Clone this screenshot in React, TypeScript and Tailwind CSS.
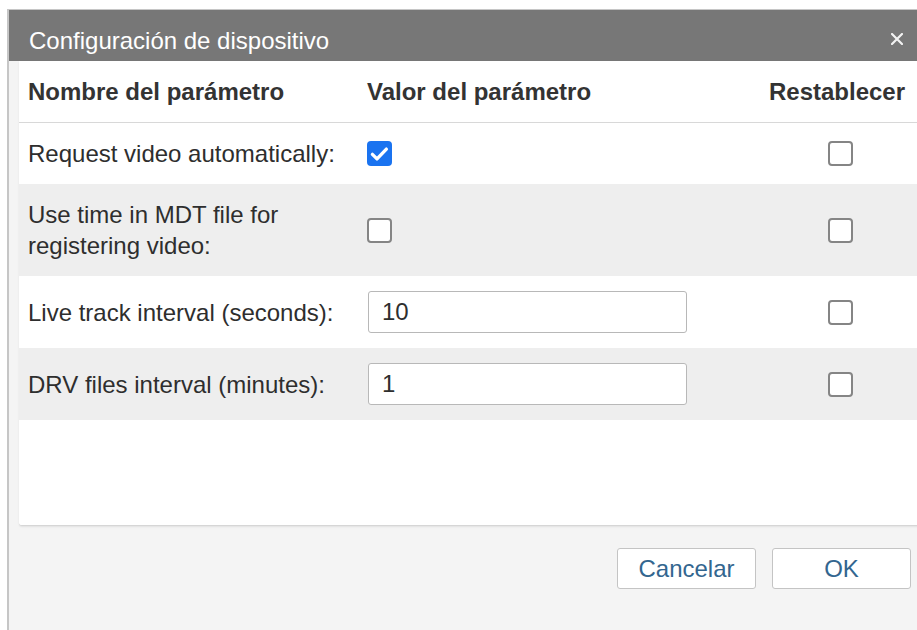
import React from "react";

type Row = {
  label: React.ReactNode;
  kind: "check" | "text";
  checked?: boolean;
  value?: string;
};

const rows: Row[] = [
  { label: "Request video automatically:", kind: "check", checked: true },
  {
    label: (
      <>
        Use time in MDT file for
        <br />
        registering video:
      </>
    ),
    kind: "check",
    checked: false,
  },
  { label: "Live track interval (seconds):", kind: "text", value: "10" },
  { label: "DRV files interval (minutes):", kind: "text", value: "1" },
];

function Box({ checked }: { checked?: boolean }) {
  if (checked) {
    return (
      <div className="w-[25px] h-[25px] rounded-[4px] bg-[#1a73f0] flex items-center justify-center">
        <svg width="25" height="25" viewBox="0 0 24 24" fill="none">
          <path
            d="M5.2 12.8 L9.6 17.2 L18.6 7.8"
            stroke="#ffffff"
            strokeWidth="3.2"
            strokeLinecap="round"
            strokeLinejoin="round"
          />
        </svg>
      </div>
    );
  }
  return (
    <div className="w-[25px] h-[25px] rounded-[4px] border-2 border-[#858585] bg-white" />
  );
}

export default function App() {
  return (
    <div
      className="w-[917px] h-[630px] overflow-hidden bg-white text-[24px] text-[#2e2e2e]"
      style={{ fontFamily: '"Liberation Sans", Arial, sans-serif' }}
    >
      <div className="ml-[7px] mt-[9px] w-[924px] border-l-2 border-t border-[#c6c6c6] bg-[#f4f4f4] flex flex-col">
        {/* title bar */}
        <div className="h-[51px] bg-[#777777] flex items-start justify-between pl-[20px] pr-[28px] pt-[19px] text-white">
          <span className="leading-[24px] whitespace-nowrap">Configuración de dispositivo</span>
          <svg width="12" height="12" viewBox="0 0 12 12" className="mt-[4px]">
            <path d="M1 1 L11 11 M11 1 L1 11" stroke="#f2f2f2" strokeWidth="2.2" strokeLinecap="round" />
          </svg>
        </div>

        {/* parameter table */}
        <div className="mx-[10px] h-[465px] bg-white border-b border-[#d6d6d6] rounded-b-[3px] shadow-[0_1px_2px_rgba(0,0,0,0.08)] flex flex-col">
          <div className="h-[62px] border-b border-[#d8d8d8] grid grid-cols-[339px_402px_160px_1fr] items-center font-bold leading-[31px] text-[#333]">
            <div className="pl-[9px] whitespace-nowrap">Nombre del parámetro</div>
            <div className="pl-[9px] whitespace-nowrap">Valor del parámetro</div>
            <div className="text-center pr-[6px] whitespace-nowrap">Restablecer</div>
            <div />
          </div>
          {rows.map((r, i) => (
            <div
              key={i}
              className={
                "grid grid-cols-[339px_402px_160px_1fr] items-center py-[15px] leading-[31px] " +
                (i % 2 === 1 ? "bg-[#eeeeee]" : "bg-white")
              }
            >
              <div className="pl-[9px] whitespace-nowrap">{r.label}</div>
              <div className="pl-[9px] flex items-center">
                {r.kind === "check" ? (
                  <Box checked={r.checked} />
                ) : (
                  <input
                    readOnly
                    defaultValue={r.value}
                    className="ml-[1px] w-[319px] h-[42px] border-[1.5px] border-[#b8b8b8] rounded-[3px] bg-white px-[13px] text-[#2e2e2e] outline-none"
                  />
                )}
              </div>
              <div className="flex justify-center">
                <Box />
              </div>
              <div />
            </div>
          ))}
        </div>

        {/* footer buttons */}
        <div className="h-[140px] flex justify-end items-start gap-[16px] pt-[22px] pr-[20px]">
          <button className="w-[139px] h-[41px] bg-white border-[1.5px] border-[#c4c4c4] rounded-[3px] text-[#33668f] leading-none">
            Cancelar
          </button>
          <button className="w-[139px] h-[41px] bg-white border-[1.5px] border-[#c4c4c4] rounded-[3px] text-[#33668f] leading-none">
            OK
          </button>
        </div>
      </div>
    </div>
  );
}
